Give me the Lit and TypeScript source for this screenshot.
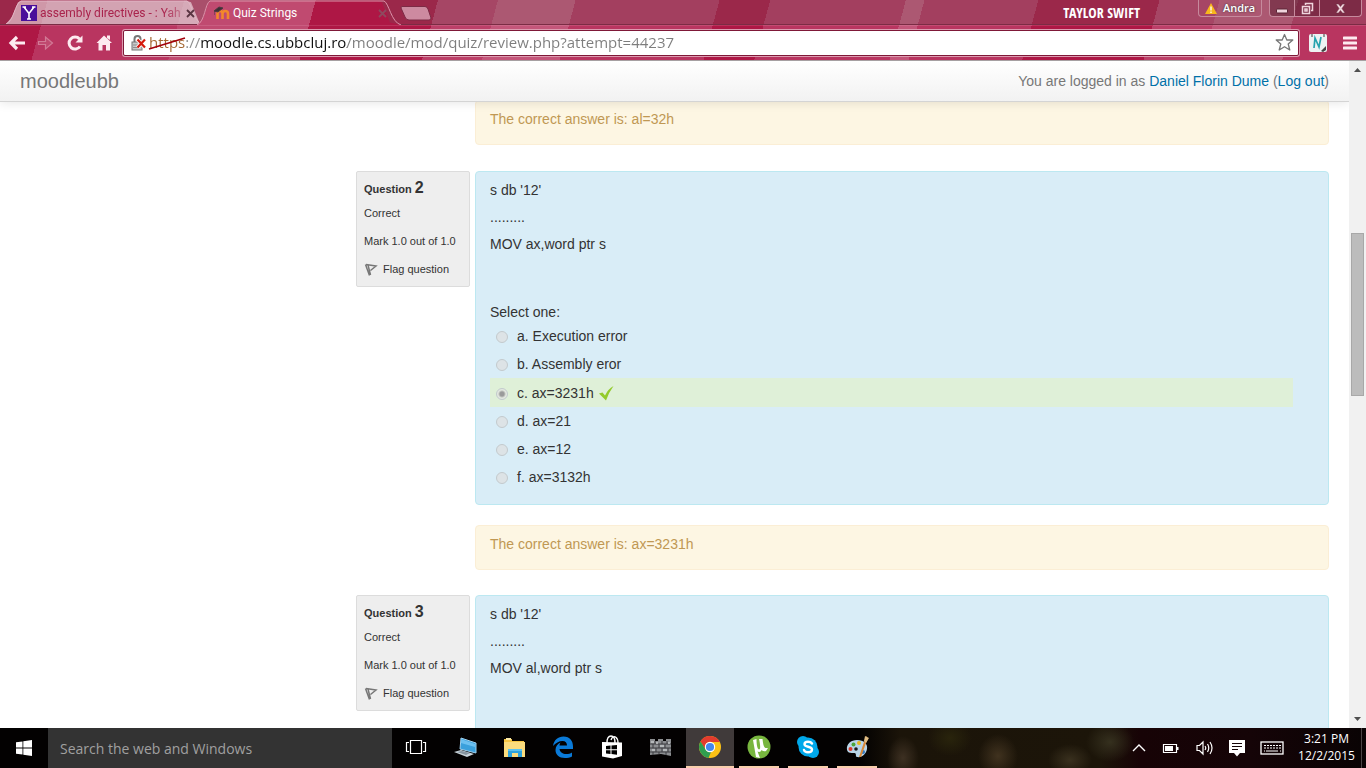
import { LitElement, html, css, svg } from "lit";
import { customElement, property } from "lit/decorators.js";

const ICONS: Record<string, unknown> = {
  pc: svg`<path d="M8 3L23 8V18L7 14Z" fill="#3aa0dc" stroke="#9fd0ee"/><path d="M8 4L22 9V12L8 8Z" fill="#6cc0f0"/><path d="M1 17L8 15L21 19L14 22Z" fill="#c9d3da"/><path d="M4 17L9 16L17 18L13 20Z" fill="#8795a0"/>`,
  folder: svg`<path d="M2 4H10V6H22V22H2Z" fill="#f6c644"/><path d="M4 3H9V5H4Z" fill="#fbe9a8"/><path d="M2 7H23V22H2Z" fill="#fbdc7d"/><path d="M6 22V14H20V22H16V18H10V22Z" fill="#2ea3dc"/><path d="M6 14H20V16H6Z" fill="#5cc3ee"/>`,
  edge: svg`<path d="M2 11C3 5 7 1.500 12.500 1.500C19 1.500 22 6 22 11.500V14H8.500C9 17.500 12 19 15 19C17.500 19 19.500 18.500 21 17.500V21.500C19 22.600 16.500 23 14 23C8 23 4.500 19.500 4.500 15C4.500 11.500 6.500 9 9.500 7.500C8.800 8.500 8.500 9.500 8.500 10.500H16C16 8 14.500 6 11.500 6C8 6 4.500 8 2 11Z" fill="#0a7ad8"/>`,
  store: svg`<path d="M2 7L22 7.500V21L13 23.500L2 21.500Z" fill="#fff"/><path d="M7 8C7 3 9 1 11 1S15 3 15 8M11 5C12 2 14 1 15.500 2C17 3 18 5 18 8" fill="none" stroke="#fff" stroke-width="1.400"/><path d="M6 11L10.500 10.500V14.300H6ZM11.500 10.400L17 10V14.300H11.500ZM6 15.300H10.500V19L6 18.500ZM11.500 15.300H17V19.700L11.500 19.100Z" fill="#000"/>`,
  wall: svg`<path d="M1 4H6V6H9V4H14V6H17V4H22V21L12 19L1 20Z" fill="#8b8d90"/><path d="M1 9H22M1 13H22M1 17H22M6 6V9M13 6V9M18 6V9M4 9V13M10 9V13M16 9V13M7 13V17M13 13V17M19 13V17M4 17V20M10 17V19M17 17V20" stroke="#3c3d40"/><path d="M2 7H5M11 11H15M3 15H6M14 15H18M7 8H9M19 8H21" stroke="#c4c6c8" stroke-width="1.500"/>`,
  chrome: svg`<circle cx="12" cy="12" r="11" fill="#fbc116"/><path d="M2.500 6.500A11 11 0 0 1 21.800 7H12A5 5 0 0 0 7.400 10L7 14Z" fill="#e23b2e"/><path d="M2.500 6.500L7.700 14.500A5 5 0 0 0 13 17L10.500 22.900A11 11 0 0 1 2.500 6.500Z" fill="#2f9e4f"/><circle cx="12" cy="12" r="5.200" fill="#fff"/><circle cx="12" cy="12" r="4.100" fill="#4587ee"/>`,
  utorrent: svg`<circle cx="12" cy="12" r="11.500" fill="#78b63f"/><path d="M6 5L9.500 4C9.500 8 10 14 12 14.500C14 14.500 13 8 12 4L15.500 4C16 8 16.500 12 18.500 13L21 13L19 16C17 16.500 15.500 16 14.500 15C14 17 12 17.500 10.500 16.500L13 23L9 22Z" fill="#fff"/>`,
  skype: svg`<circle cx="12" cy="12" r="9.500" fill="#00a8ea"/><circle cx="7" cy="7" r="6" fill="#00a8ea"/><circle cx="17" cy="17" r="6" fill="#00a8ea"/><path d="M16 8.500C15 7 13.500 6.800 12 6.800C10 6.800 8.500 7.600 8.500 9.200C8.500 12.500 16 11 16 14.500C16 16.500 14 17.300 12 17.300C10 17.300 8.500 16.600 8 15" fill="none" stroke="#fff" stroke-width="2.400" stroke-linecap="round"/>`,
  paint: svg`<path d="M2 15C1 9 6 5 12 5C19 5 23 9 22 14C21 19 17 23 12 22C10 21.500 12 18.500 9.500 18C7 17.500 3 19 2 15Z" fill="#b9d5e8"/><circle cx="5.500" cy="14" r="2" fill="#d83a2b"/><circle cx="8.500" cy="9.500" r="2" fill="#4aa53a"/><circle cx="14" cy="8" r="2" fill="#e8b81d"/><circle cx="11" cy="14" r="1.800" fill="#1b1b1b"/><circle cx="18" cy="17" r="2" fill="#3279c4"/><path d="M14 22L19 7L21.500 1L23 4L21 8L16 22Z" fill="#d98a3a"/><path d="M19 6L20 1L24 3L21 8Z" fill="#e0bd85"/>`,
};

const APPS = [
  { id: "pc", label: "This PC" },
  { id: "folder", label: "File Explorer" },
  { id: "edge", label: "Edge" },
  { id: "store", label: "Store" },
  { id: "wall", label: "Fortress" },
  { id: "chrome", label: "Chrome", state: "active" },
  { id: "utorrent", label: "uTorrent", state: "open" },
  { id: "skype", label: "Skype", state: "open" },
  { id: "paint", label: "Paint", state: "open" },
];

const reset = css`
  * { box-sizing: border-box; }
  button, input {
    font: inherit; color: inherit; margin: 0; padding: 0;
    border: 0; background: none; outline: 0;
  }
  button { display: flex; align-items: center; justify-content: center; }
  svg { display: block; flex: none; }
`;

@customElement("browser-chrome")
class BrowserChrome extends LitElement {
  static styles = [reset, css`
    :host {
      display: block;
      font: 12px/16px "Open Sans", "Noto Sans", sans-serif;
      --stripes: linear-gradient(105deg,
        #ae1745 46px, #b93560 46px 178px, #c04a70 178px 305px, #ae1745 305px 423px,
        #bc3f68 423px 481px, #c4567a 481px 556px, #b93560 556px 695px,
        #ae1745 695px 744px, #b93560 744px 875px, #c4567a 875px 893px,
        #b93560 893px 1003px, #ae1745 1003px 1120px, #bc3f68 1120px 1178px,
        #c4567a 1178px 1254px, #b93560 1254px);
    }
    .frame { background: var(--stripes); border-bottom: 1px solid #a6a0a2; }
    .strip {
      display: flex; align-items: flex-start; height: 25px; padding-left: 6px;
      background: rgba(96, 98, 92, .24); border-bottom: 1px solid #7a2c44;
    }
    .tab {
      position: relative; display: flex; align-items: center;
      width: 196px; height: 24px; padding: 2px 6px 0 15px; margin-right: -5px;
      color: #a9234c; font-family: Roboto, "Open Sans", sans-serif;
    }
    .tab.active { width: 205px; height: 25px; padding: 1px 14px 0 17px; margin-right: -2px; color: #fff; }
    .fill {
      position: absolute; inset: 1px 0 0 0;
      background: rgba(255, 255, 255, .52);
      clip-path: polygon(0 100%, 6px 70%, 12px 5%, 15px 0, 181px 0, 185px 5%, 193px 90%, 100% 100%);
    }
    .active .fill {
      background: var(--stripes); background-size: 1366px 60px; background-position: -197px -1px;
    }
    .edge { position: absolute; left: 0; top: 0; }
    .tab > .favicon, .tab > .title, .tab > .close { position: relative; }
    .title { flex: 1; margin-left: 3px; white-space: nowrap; }
    .tab:not(.active) .title { -webkit-mask-image: linear-gradient(90deg, #000 85%, rgba(0, 0, 0, .3)); }
    .close { width: 12px; height: 16px; }
    .artist {
      margin-left: auto; margin-right: 58px; color: #fff; line-height: 25px;
      font-family: "Liberation Sans Narrow", "Open Sans Condensed", "Liberation Sans", sans-serif;
      font-weight: bold; font-size: 14px; white-space: nowrap;
    }
    .profile {
      height: 17px; width: 64px; gap: 6px; color: #fff; font-size: 11px; font-weight: 600;
      text-shadow: 0 0 2px #333;
      border: 1px solid #c68a9d; border-top: 0; border-radius: 0 0 4px 4px;
    }
    .window {
      display: flex; height: 17px; margin: 0 4px 0 7px; background: rgba(80, 20, 40, .45);
      border: 1px solid #c68a9d; border-top: 0; border-radius: 0 0 4px 4px;
    }
    .window button { width: 25px; border-right: 1px solid #c68a9d; }
    .window button:last-child { width: 41px; border: 0; }
    .toolbar { display: flex; align-items: center; height: 35px; padding: 0 8px 1px; border-top: 1px solid rgba(255, 200, 220, .15); }
    .nav { display: flex; gap: 11px; margin-right: 10px; }
    .nav button, .ext { width: 18px; height: 20px; }
    .omnibox {
      position: relative; flex: 1; display: flex; align-items: center; height: 26px;
      padding: 0 4px 0 7px; background: #fff; border-radius: 2px;
      border: 1px solid #7f1838; box-shadow: 0 0 0 1px #dd9bb0;
    }
    .url {
      flex: 1; min-width: 0; height: 24px; margin-left: 2px; padding-bottom: 1px; font-size: 15px;
      background: linear-gradient(90deg, #a3652f 37px, #8a8a8a 37px 52px, #111 52px 198px, #7d7d7d 198px);
      -webkit-background-clip: text; background-clip: text; color: transparent;
    }
    .strike { position: absolute; left: 24px; top: 4px; }
    .ext { margin-left: 10px; }
    .menu { width: 16px; height: 20px; margin-left: 15px; }
  `];

  render() {
    return html`
      <header class="frame">
        <div class="strip">
          <div class="tab">
            <span class="fill"></span>
            <svg class="edge" width="196" height="24"><path d="M0 24C8 21 9 3 15 1H181C186 3 187 21 196 24" fill="none" stroke="#e3b6c5"/></svg>
            <svg class="favicon" width="16" height="16"><rect width="16" height="16" fill="#4a0f9a"/><path d="M3 2L8 8.500L13 2M8 8V14M1.500 2H5M11 2H14.500M6 14H10" fill="none" stroke="#fff" stroke-width="1.600"/></svg>
            <span class="title">assembly directives - : Yah</span>
            <button class="close" aria-label="Close tab"><svg width="9" height="9"><path d="M1 1L8 8M8 1L1 8" stroke="#5a3542" stroke-width="1.800"/></svg></button>
          </div>
          <div class="tab active">
            <span class="fill"></span>
            <svg class="edge" width="205" height="25"><path d="M0 25C8 22 8 3 13 1H187C192 3 194 22 204 25" fill="none" stroke="#dc93aa"/></svg>
            <svg class="favicon" width="16" height="16"><path d="M3.500 14V8.500Q3.500 6 6 6T8.500 8.500V14M8.500 9Q8.500 6 11.200 6T14 8.500V14" fill="none" stroke="#f3872b" stroke-width="2.600"/><path d="M0 6L5 2L9 3L4 7ZM0 6V10" fill="#3b3036" stroke="#4d3a42"/></svg>
            <span class="title">Quiz Strings</span>
            <button class="close" aria-label="Close tab"><svg width="9" height="9"><path d="M1 1L8 8M8 1L1 8" stroke="#8e4a5f" stroke-width="1.800"/></svg></button>
          </div>
          <button aria-label="New tab"><svg width="32" height="24"><path d="M2 6.500H25Q27 6.500 28 9L31 18Q31 20 29 20H9Q6 20 5 17L1 8Q1 6.500 2 6.500Z" fill="#cd8aa0" stroke="#7c2a45"/></svg></button>
          <span class="artist">TAYLOR SWIFT</span>
          <button class="profile"><svg width="12" height="12"><path d="M6 1L12 12H0Z" fill="#f8b71c"/><path d="M6 4.500V8.500M6 9.500V11" stroke="#fff" stroke-width="1.300"/></svg>Andra</button>
          <div class="window">
            <button aria-label="Minimize"><svg width="12" height="12"><rect x=".5" y="7" width="11" height="4" rx="1" fill="#f0d5dd" stroke="#5a2435"/></svg></button>
            <button aria-label="Restore"><svg width="13" height="13"><path d="M4.500 3V1.500H11.500V8.500H10M1.500 4.500H8.500V11.500H1.500ZM4 7H6V9H4Z" fill="none" stroke="#f0d5dd" stroke-width="1.500"/></svg></button>
            <button aria-label="Close"><svg width="11" height="11"><path d="M1 1H3.500L5.500 3.500L7.500 1H10L7 5.500L10 10H7.500L5.500 7.500L3.500 10H1L4 5.500Z" fill="#f0d5dd" stroke="#6a3042" stroke-width=".5"/></svg></button>
          </div>
        </div>
        <div class="toolbar">
          <div class="nav">
            <button aria-label="Back"><svg width="18" height="18"><path d="M9 3L3 9L9 15M3 9H17" fill="none" stroke="#fdebf0" stroke-width="3.200"/></svg></button>
            <button aria-label="Forward"><svg width="18" height="18"><path d="M1.500 7.500H8.500V3L15.500 9L8.500 15V10.500H1.500Z" fill="#c04a70" stroke="#d27a96" stroke-width="1.200"/></svg></button>
            <button aria-label="Reload"><svg width="18" height="18"><path d="M14 12.500A6 6 0 1 1 13.500 5" fill="none" stroke="#fdebf0" stroke-width="3"/><path d="M16.500 1.500V8.500H9.500Z" fill="#fdebf0"/></svg></button>
            <button aria-label="Home"><svg width="18" height="18"><path d="M9 1.500L17 9H15V16.500H11V11H7.500V16.500H3.500V9H1.500ZM12 1.500H15V6L12 4Z" fill="#fdebf0"/></svg></button>
          </div>
          <div class="omnibox">
            <svg width="16" height="18"><path d="M3.500 9V5Q3.500 2 6.500 2T9.500 5V9" fill="none" stroke="#777" stroke-width="2"/><rect x="1" y="8" width="10" height="8" fill="#c9c9c9" stroke="#777"/><path d="M2 11H9M2 13.500H9" stroke="#8d8d8d"/><path d="M6.500 5.500L14 13.500M14 5.500L6.500 13.500" stroke="#fff" stroke-width="4"/><path d="M6.500 5.500L14 13.500M14 5.500L6.500 13.500" stroke="#d4180c" stroke-width="2.200"/></svg>
            <input class="url" aria-label="Address" .value=${"https://moodle.cs.ubbcluj.ro/moodle/mod/quiz/review.php?attempt=44237"} />
            <svg class="strike" width="40" height="16"><path d="M1 14L37 3" stroke="#a3000b" stroke-width="1.600"/></svg>
            <button aria-label="Bookmark"><svg width="19" height="19"><path d="M9.500 1.500L11.800 7H17.800L13.200 11L14.800 17L9.500 13.700L4.200 17L5.800 11L1.200 7H7.200Z" fill="#fff" stroke="#777" stroke-width="1.300" stroke-linejoin="round"/></svg></button>
          </div>
          <button class="ext" aria-label="Notes"><svg width="18" height="18"><rect width="18" height="18" rx="2" fill="#eef2f3"/><path d="M3 0V3M15 0V3" stroke="#777" stroke-width="1.500"/><path d="M5 14L6 4L10 13L12 3" fill="none" stroke="#27a3ae" stroke-width="1.700"/><path d="M12 17L17 12V16L14 18Z" fill="#444"/></svg></button>
          <button class="menu" aria-label="Menu"><svg width="14" height="14"><path d="M1 2H13M1 7H13M1 12H13" stroke="#fdebf0" stroke-width="3.200" stroke-linecap="round"/></svg></button>
        </div>
      </header>`;
  }
}

interface Option { text: string; chosen?: boolean; }

@customElement("quiz-question")
class QuizQuestion extends LitElement {
  @property({ type: Number }) number = 1;
  @property() code = "";
  @property() answer = "";
  @property({ attribute: false }) options: Option[] = [];

  static styles = [reset, css`
    :host { display: block; }
    .question { display: grid; grid-template-columns: 114px minmax(0, 1fr); column-gap: 5px; align-items: start; }
    .info {
      display: flex; flex-direction: column; gap: 12px; padding: 6px 7px 9px;
      background: #eee; border: 1px solid #dcdcdc; border-radius: 2px;
      font-size: 11px; line-height: 16px;
    }
    h3 { margin: 0 0 -6px; font-size: 11px; line-height: 20px; }
    h3 b { font-size: 16px; }
    .info p { margin: 0; white-space: nowrap; }
    .flag { align-self: flex-start; gap: 5px; line-height: 16px; white-space: nowrap; }
    .body {
      padding: 9px 35px 13px 14px; min-height: 334px; color: #333;
      background: #d9edf7; border: 1px solid #bce8f1; border-radius: 4px;
    }
    .body p { margin: 0 0 9px; line-height: 18px; }
    fieldset { margin: 50px 0 0; padding: 0; border: 0; min-width: 0; }
    legend { padding: 0; line-height: 18px; }
    .options { padding-top: 1px; }
    .option { display: flex; align-items: center; height: 28px; line-height: 28px; }
    .option.correct { height: 29px; background: #dff0d8; }
    .option input {
      appearance: none; width: 12px; height: 12px; margin: 2px 9px 0 6px;
      border: 1px solid #c3cacd; border-radius: 50%; background: #dde3e6;
    }
    .option input:checked { background: radial-gradient(circle, #9a9a9a 2px, #e3e8e0 4px); }
    .option svg { margin-left: 4px; }
    .feedback {
      height: 45px; margin: 20px 0 0 119px; padding: 8px 14px; line-height: 20px;
      color: #c09853; background: #fdf6e3; border: 1px solid #fbeed5; border-radius: 4px;
    }
    .lone { margin-top: 0; margin-bottom: 1px; }
  `];

  render() {
    const feedback = (cls: string) =>
      this.answer ? html`<div class="feedback ${cls}">The correct answer is: ${this.answer}</div>` : null;
    if (!this.code) return feedback("lone");
    return html`
      <section class="question">
        <div class="info">
          <h3>Question <b>${this.number}</b></h3>
          <p>Correct</p>
          <p>Mark 1.0 out of 1.0</p>
          <button class="flag"><svg width="14" height="14"><path d="M1.500 2.500L5.500 13.500M4 3L6.500 13M2 2.500L12 4L6.500 8.500" fill="none" stroke="#777" stroke-width="1.500"/></svg>Flag question</button>
        </div>
        <div class="body">
          <p>s db '12'</p>
          <p>.........</p>
          <p>${this.code}</p>
          ${this.options.length ? html`
          <fieldset>
            <legend>Select one:</legend>
            <div class="options">
              ${this.options.map((o, i) => html`
                <div class="option ${o.chosen ? "correct" : ""}">
                  <input type="radio" name="q" id="o${i}" disabled ?checked=${!!o.chosen} />
                  <label for="o${i}">${"abcdef"[i]}. ${o.text}</label>
                  ${o.chosen ? html`<svg width="16" height="16"><path d="M1 8.500L4.500 7.500L7 10.500Q10 4 15.500 1Q11 7 8 15.500Z" fill="#93cb2b"/></svg>` : null}
                </div>`)}
            </div>
          </fieldset>` : null}
        </div>
      </section>
      ${feedback("")}`;
  }
}

@customElement("moodle-page")
class MoodlePage extends LitElement {
  static styles = [reset, css`
    :host {
      display: flex; min-height: 0; overflow: hidden; background: #fff;
      font: 14px/20px "Liberation Sans", Arial, sans-serif; color: #333;
    }
    .view { flex: 1; min-width: 0; overflow: hidden; }
    .navbar {
      position: relative; z-index: 1; display: flex; justify-content: space-between; align-items: center;
      height: 41px; padding: 0 20px; color: #777;
      background: linear-gradient(#fff, #f2f2f2); border-bottom: 1px solid #d4d4d4;
      box-shadow: 0 1px 10px rgba(0, 0, 0, .1);
    }
    a { color: #0070a8; text-decoration: none; }
    .brand { color: #777; font-size: 20px; }
    .content { display: grid; grid-template-columns: minmax(0, 336px) minmax(0, 1fr); padding: 0 20px; margin-top: -2px; }
    .quiz { grid-column: 2; display: flex; flex-direction: column; gap: 25px; }
    quiz-question { display: flow-root; }
    .bar { display: flex; flex-direction: column; width: 17px; background: #f1f1f1; }
    .bar svg { width: 17px; height: 17px; }
    .before { flex: 155; }
    .thumb { flex: 162; margin: 0 2px; background: #bcbcbc; border: 1px solid #a8a8a8; }
    .after { flex: 316; }
  `];

  render() {
    const options: Option[] = [
      { text: "Execution error" }, { text: "Assembly eror" }, { text: "ax=3231h", chosen: true },
      { text: "ax=21" }, { text: "ax=12" }, { text: "ax=3132h" },
    ];
    return html`
      <div class="view">
        <nav class="navbar">
          <a class="brand" href="#">moodleubb</a>
          <span>You are logged in as <a href="#">Daniel Florin Dume</a> (<a href="#">Log out</a>)</span>
        </nav>
        <main class="content">
          <div class="quiz">
            <quiz-question answer="al=32h"></quiz-question>
            <quiz-question .number=${2} code="MOV ax,word ptr s" answer="ax=3231h" .options=${options}></quiz-question>
            <quiz-question .number=${3} code="MOV al,word ptr s"></quiz-question>
          </div>
        </main>
      </div>
      <div class="bar">
        <svg><path d="M5 11L8.500 7L12 11Z" fill="#505050"/></svg>
        <span class="before"></span><span class="thumb"></span><span class="after"></span>
        <svg><path d="M5 6L8.500 10L12 6Z" fill="#505050"/></svg>
      </div>`;
  }
}

@customElement("task-bar")
class TaskBar extends LitElement {
  static styles = [reset, css`
    :host {
      display: flex; height: 40px; color: #fff;
      font: 12px/17px "Open Sans", "Noto Sans", sans-serif;
      background:
        radial-gradient(ellipse 16px 22px at 903px 30px, #3d3022, transparent),
        radial-gradient(ellipse 22px 18px at 950px 10px, #29240c, transparent),
        radial-gradient(ellipse 20px 22px at 998px 28px, #40321f, transparent),
        radial-gradient(ellipse 22px 16px at 1070px 32px, #39301e, transparent),
        radial-gradient(ellipse 24px 20px at 1110px 14px, #35301e, transparent),
        linear-gradient(90deg, #030101 860px, #1b1409 900px, #1c1509 1100px, #170306 1140px, #150407 1250px, #090304);
    }
    .start { width: 48px; }
    .search { width: 344px; padding: 0 12px; font-size: 14px; background: #333; }
    .search::placeholder { color: #a0a0a0; opacity: 1; }
    .apps { display: flex; gap: 1px; }
    .app { width: 48px; height: 40px; border-bottom: 2px solid transparent; }
    .app.active { background: #403a3a; border-bottom-color: #f8ceac; }
    .app.open { background: linear-gradient(#f8ceac, #f8ceac) 50% 38px / 40px 2px no-repeat border-box; }
    .tray { display: flex; align-items: center; margin-left: auto; gap: 14px; }
    .tray button { height: 40px; }
    .tray .clock {
      flex-direction: column; width: 70px; margin: 0 4px 0 -6px; padding-bottom: 2px;
      border-right: 1px solid #4a4445;
    }
  `];

  render() {
    return html`
      <button class="start" aria-label="Start"><svg width="16" height="16"><path d="M0 2.300L6.500 1.400V7.500H0ZM7.300 1.200L16 0V7.500H7.300ZM0 8.500H6.500V14.600L0 13.700ZM7.300 8.500H16V16L7.300 14.800Z" fill="#fff"/></svg></button>
      <input class="search" aria-label="Search" placeholder="Search the web and Windows" />
      <div class="apps">
        <button class="app" aria-label="Task View"><svg width="22" height="16"><path d="M5.500 1.500H16.500V14.500H5.500ZM4 3.500H1.500V12.500H4M18 3.500H20.500V12.500H18" fill="none" stroke="#fff" stroke-width="1.200"/></svg></button>
        ${APPS.map((a) => html`
          <button class="app ${a.state ?? ""}" aria-label=${a.label}><svg width="24" height="24">${ICONS[a.id]}</svg></button>`)}
      </div>
      <div class="tray">
        <button aria-label="Show hidden icons"><svg width="14" height="10"><path d="M1 8L7 2L13 8" fill="none" stroke="#fff" stroke-width="1.400"/></svg></button>
        <button aria-label="Battery"><svg width="22" height="12"><path d="M3.500 2.500H16.500V10.500H3.500Z" fill="none" stroke="#fff" stroke-width="1.200"/><path d="M5 4H13V9H5ZM17 5H18.500V8H17Z" fill="#fff"/></svg></button>
        <button aria-label="Volume"><svg width="18" height="16"><path d="M1 5.500H3.500L7 2V14L3.500 10.500H1ZM9 6Q10.500 8 9 10M11.500 4Q14 8 11.500 12M14 2Q18 8 14 14" fill="none" stroke="#fff" stroke-width="1.200"/></svg></button>
        <button aria-label="Notifications"><svg width="18" height="18"><path d="M1 1H17V14H12L9 17.500L6 14H1Z" fill="#fff"/><path d="M4 4.500H14M4 7.500H14M4 10.500H10" stroke="#150407" stroke-width="1.200"/></svg></button>
        <button aria-label="Keyboard"><svg width="24" height="14"><rect x="1" y="1" width="22" height="12" fill="none" stroke="#fff" stroke-width="1.300"/><path d="M4 4.500H21M4 7H21" stroke="#fff" stroke-dasharray="2 1"/><path d="M6 10H18M4 10H5M20 10H21" stroke="#fff"/></svg></button>
        <button class="clock"><span>3:21 PM</span><span>12/2/2015</span></button>
      </div>`;
  }
}

@customElement("app-root")
class AppRoot extends LitElement {
  static styles = css`
    :host { display: flex; flex-direction: column; height: 100vh; overflow: hidden; }
    moodle-page { flex: 1; }
  `;
  render() {
    return html`<browser-chrome></browser-chrome><moodle-page></moodle-page><task-bar></task-bar>`;
  }
}
